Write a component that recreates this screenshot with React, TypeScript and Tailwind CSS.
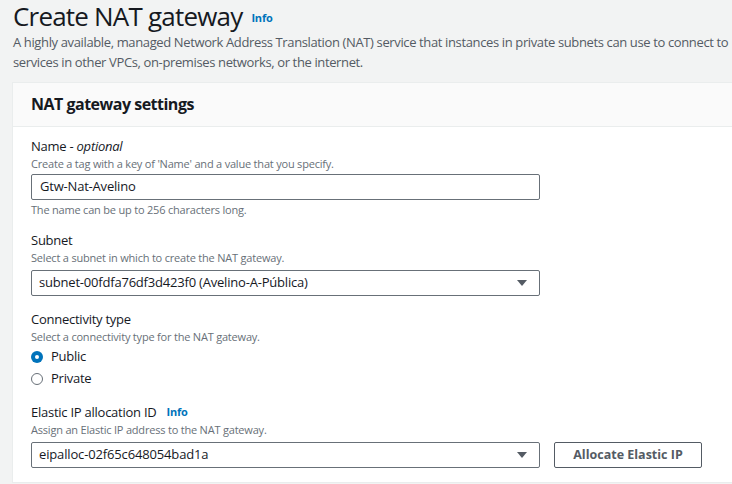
import React from "react";

const Arrow = () => (
  <svg width="12" height="8" viewBox="0 0 12 8" className="shrink-0">
    <path d="M1 1 L11 1 L6 7 Z" fill="#545b64" />
  </svg>
);

export default function App() {
  return (
    <div
      className="w-[732px] h-[484px] overflow-hidden bg-[#f2f3f3] text-[#16191f]"
      style={{ fontFamily: '"Open Sans", "Noto Sans", sans-serif' }}
    >
      <div className="pl-[13px]">
        <div className="flex items-end gap-[9px] h-[32px]">
          <h1 className="text-[26px] leading-[32px] font-normal whitespace-nowrap tracking-[-0.8px]">Create NAT gateway</h1>
          <span className="text-[11px] font-bold text-[#0073bb] mb-[6px] tracking-[-0.2px]">Info</span>
        </div>
        <p className="text-[13px] leading-[20px] text-[#545b64] whitespace-nowrap tracking-[-0.37px]">
          A highly available, managed Network Address Translation (NAT) service that instances in private subnets can use to connect to
          <br />
          services in other VPCs, on-premises networks, or the internet.
        </p>
      </div>
      <div className="ml-[12px] mt-[10px] bg-white border-l border-t border-[#eaeded]">
        <div className="h-[44px] bg-[#fafafa] border-b border-[#eaeded] flex items-center pl-[18px]">
          <h2 className="text-[16px] font-bold text-[#16191f] tracking-[-0.5px] mt-[-2px]">NAT gateway settings</h2>
        </div>
        <div className="pl-[18px] pt-[9px] pb-[14px] flex flex-col border-b border-[#eaeded]">
          {/* Name */}
          <div className="flex flex-col">
            <div className="text-[13px] leading-[20px] tracking-[-0.25px]">
              Name - <i>optional</i>
            </div>
            <div className="text-[11px] leading-[16px] text-[#687078] tracking-[-0.2px]">
              Create a tag with a key of 'Name' and a value that you specify.
            </div>
            <div className="mt-[2px] w-[509px] h-[26px] border border-[#687078] rounded-[2px] flex items-center pl-[8px] text-[13px] tracking-[-0.2px]">
              Gtw-Nat-Avelino
            </div>
            <div className="text-[11px] leading-[16px] text-[#687078] mt-[2px] tracking-[-0.2px]">
              The name can be up to 256 characters long.
            </div>
          </div>
          {/* Subnet */}
          <div className="flex flex-col mt-[12px]">
            <div className="text-[13px] leading-[20px] tracking-[-0.25px]">Subnet</div>
            <div className="text-[11px] leading-[16px] text-[#687078] tracking-[-0.2px]">
              Select a subnet in which to create the NAT gateway.
            </div>
            <div className="mt-[4px] w-[509px] h-[26px] border border-[#687078] rounded-[2px] flex items-center justify-between pl-[7px] pr-[11px] text-[13px]">
              <span className="tracking-[-0.2px]">subnet-00fdfa76df3d423f0 (Avelino-A-Pública)</span>
              <Arrow />
            </div>
          </div>
          {/* Connectivity */}
          <div className="flex flex-col mt-[13px]">
            <div className="text-[13px] leading-[20px] tracking-[-0.25px]">Connectivity type</div>
            <div className="text-[11px] leading-[16px] text-[#687078] tracking-[-0.2px]">
              Select a connectivity type for the NAT gateway.
            </div>
            <div className="flex items-center gap-[8px] mt-[1px] h-[22px]">
              <span className="w-[12px] h-[12px] rounded-full bg-[#0073bb] flex items-center justify-center">
                <span className="w-[4px] h-[4px] rounded-full bg-white" />
              </span>
              <span className="text-[13px] tracking-[-0.25px]">Public</span>
            </div>
            <div className="flex items-center gap-[8px] h-[22px]">
              <span className="w-[12px] h-[12px] rounded-full border border-[#687078] bg-white" />
              <span className="text-[13px] tracking-[-0.25px]">Private</span>
            </div>
          </div>
          {/* Elastic IP */}
          <div className="flex flex-col mt-[13px]">
            <div className="flex items-center gap-[10px] text-[13px] leading-[18px]">
              <span className="tracking-[-0.25px]">Elastic IP allocation ID</span>
              <span className="text-[11px] font-bold text-[#0073bb] tracking-[-0.2px]">Info</span>
            </div>
            <div className="text-[11px] leading-[16px] text-[#687078] tracking-[-0.2px] mt-[1px]">
              Assign an Elastic IP address to the NAT gateway.
            </div>
            <div className="mt-[4px] flex items-center gap-[14px]">
              <div className="w-[509px] h-[26px] border border-[#687078] rounded-[2px] flex items-center justify-between pl-[7px] pr-[11px] text-[13px]">
                <span className="tracking-[-0.15px]">eipalloc-02f65c648054bad1a</span>
                <Arrow />
              </div>
              <div className="w-[148px] h-[26px] border border-[#545b64] rounded-[2px] flex items-center justify-center text-[12.5px] font-bold text-[#545b64]">
                Allocate Elastic IP
              </div>
            </div>
          </div>
        </div>
      </div>
    </div>
  );
}
